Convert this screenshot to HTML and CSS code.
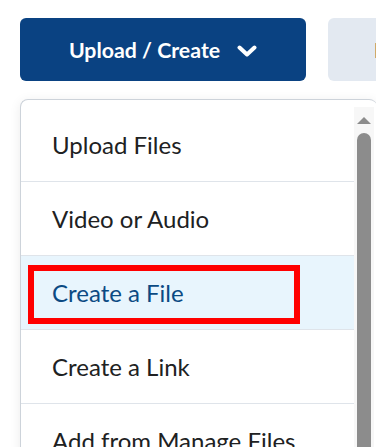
FILE: index.html
```html
<!DOCTYPE html>
<html>

<head>
  <meta charset="UTF-8">
  <title>Upload / Create</title>
  <link rel="stylesheet" href="styles.css">
</head>

<body>
  <!-- Barra de botones -->
  <div class="barra">
    <button class="boton-principal">
      Upload / Create
      <svg class="chevron" width="20" height="14" viewBox="0 0 20 14">
        <path d="M2.5 3.5 L10 10.5 L17.5 3.5" fill="none" stroke="white" stroke-width="4" stroke-linecap="round" stroke-linejoin="round" />
      </svg>
    </button>
    <button class="boton-secundario">New Folder</button>
  </div>

  <!-- Menú desplegable -->
  <div class="menu">
    <ul class="lista">
      <li class="opcion">Upload Files</li>
      <li class="opcion">Video or Audio</li>
      <li class="opcion activa">Create a File
        <span class="marca"></span>
      </li>
      <li class="opcion">Create a Link</li>
      <li class="opcion">Add from Manage Files</li>
    </ul>
    <div class="scroll">
      <div class="flecha"></div>
      <div class="pulgar"></div>
    </div>
  </div>
</body>

</html>
```

FILE: styles.css
```css
body {
  font-family: 'Lato', sans-serif;
  background-color: #ffffff;
  margin: 0;
  padding: 18px 0 0 20px;
  overflow: hidden;
  height: 447px;
  box-sizing: border-box;
}

.barra {
  display: flex;
  gap: 22px;
  width: 600px;
}

.boton-principal {
  display: flex;
  align-items: center;
  justify-content: center;
  gap: 17px;
  width: 286px;
  height: 63px;
  background-color: #0a4282;
  color: white;
  border: none;
  border-radius: 6px;
  font-family: 'Lato', sans-serif;
  font-weight: bold;
  font-size: 21.3px;
  padding: 0;
}

.chevron {
  margin-top: 2px;
}

.boton-secundario {
  width: 240px;
  height: 63px;
  background-color: #e3e9f1;
  color: #202122;
  border: none;
  border-radius: 6px;
  font-family: 'Lato', sans-serif;
  font-weight: bold;
  font-size: 21.3px;
  text-align: left;
  padding: 0 0 0 46px;
}

.menu {
  display: flex;
  width: 356px;
  margin-top: 18px;
  border: 1px solid #cdd3da;
  border-right: none;
  border-radius: 8px 8px 0 0;
  background-color: #ffffff;
  box-shadow: 0 2px 12px rgba(0, 0, 0, 0.08);
  height: 400px;
  overflow: hidden;
}

.lista {
  flex: 1;
  list-style: none;
  margin: 0;
  padding: 7px 0 0 0;
}

.opcion {
  position: relative;
  height: 73px;
  display: flex;
  align-items: center;
  padding-left: 31px;
  font-size: 24px;
  color: #202122;
  border-bottom: 1px solid #dfe4ea;
}

.opcion:first-child {
  height: 74px;
}

.opcion.activa {
  background-color: #e8f5fd;
  color: #0b4a83;
}

/* Recuadro rojo de señalización */
.marca {
  position: absolute;
  left: 7px;
  top: 9px;
  width: 260px;
  height: 47px;
  border: 6px solid #ff0000;
}

.scroll {
  width: 20px;
  margin-top: 7px;
  margin-right: 3px;
  background-color: #f7f7f7;
  display: flex;
  flex-direction: column;
  align-items: center;
}

.flecha {
  margin-top: 10px;
  width: 0;
  height: 0;
  border-left: 7px solid transparent;
  border-right: 7px solid transparent;
  border-bottom: 7px solid #8c8c8c;
}

.pulgar {
  margin-top: 9px;
  width: 14px;
  flex: 1;
  background-color: #8c8c8c;
  border-radius: 7px 7px 0 0;
}
```
